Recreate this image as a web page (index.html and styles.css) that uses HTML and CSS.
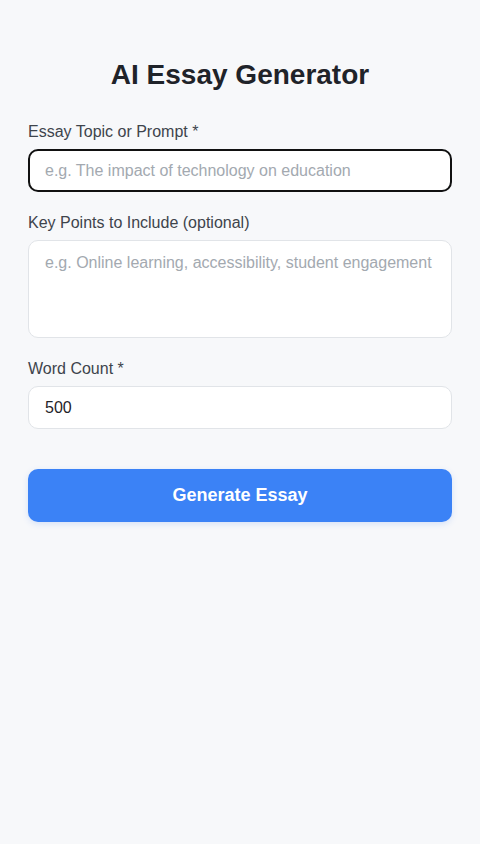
FILE: index.html
```html
<!DOCTYPE html>
<html>
    <head>
        <meta http-equiv="Content-Type" content="text/html; charset=utf-8"/>
        <link rel="stylesheet" href="styles.css">
    </head>
    <body>
        <div class="contain">
            <h1 class="title">AI Essay Generator</h1>

            <form class="essay-form" onsubmit="return false">
                <div class="field">
                    <label for="topic">Essay Topic or Prompt *</label>
                    <input type="text" id="topic" class="box box-focus" placeholder="e.g. The impact of technology on education"/>
                </div>

                <div class="field">
                    <label for="points">Key Points to Include (optional)</label>
                    <textarea id="points" class="box box-area" placeholder="e.g. Online learning, accessibility, student engagement"></textarea>
                </div>

                <div class="field">
                    <label for="words">Word Count *</label>
                    <input type="number" id="words" class="box" value="500"/>
                </div>

                <button type="submit" class="butt">Generate Essay</button>
            </form>
        </div>
    </body>
</html>
```

FILE: styles.css
```css
body {
    margin: 0;
    background-color: #f7f8fa;
    font-family: "Liberation Sans", Arial, sans-serif;
    color: #1f2329;
}

.contain {
    padding: 59px 28px 40px;
}

.title {
    margin: 0 0 32px;
    font-size: 28px;
    line-height: 32px;
    font-weight: bold;
    text-align: center;
    color: #1f2329;
}

.field {
    display: flex;
    flex-direction: column;
    margin-bottom: 22px;
}

.field label {
    font-size: 16px;
    line-height: 18px;
    color: #3e444c;
    margin-bottom: 8px;
}

.box {
    box-sizing: border-box;
    width: 100%;
    height: 43px;
    padding: 12px 16px;
    border: 1px solid #e1e4e8;
    border-radius: 10px;
    background-color: #fff;
    font-family: inherit;
    font-size: 16px;
    line-height: 18px;
    color: #1f2329;
    outline: 0;
}

.box::placeholder {
    color: #a3a9b0;
}

/* the field that has the cursor */
.box-focus {
    border: 2px solid #111;
    padding: 11px 15px;
}

.box-area {
    height: 98px;
    resize: none;
    padding-top: 13px;
}

.butt {
    display: block;
    width: 100%;
    height: 53px;
    margin-top: 40px;
    border: 0;
    border-radius: 10px;
    background-color: #3b82f6;
    color: #fff;
    font-family: inherit;
    font-size: 18px;
    font-weight: bold;
    cursor: pointer;
    box-shadow: 0 2px 6px rgba(59, 130, 246, 0.18);
}

.butt:hover {
    background-color: #2f74e6;
}
```
